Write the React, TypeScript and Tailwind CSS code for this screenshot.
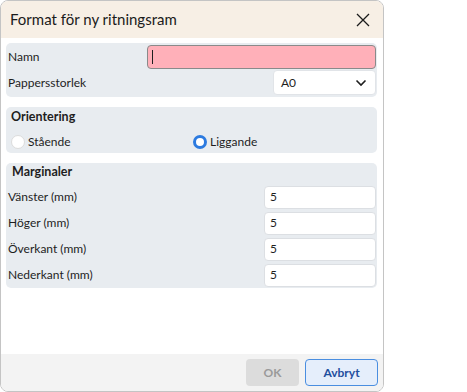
import React from "react";

const F = { fontFamily: 'Lato, "Noto Sans", sans-serif' };

function Row({ label, value }: { label: string; value: string }) {
  return (
    <div className="flex items-center justify-between h-[26px]">
      <span className="text-[12px] text-[#1e1e1e] pl-[1px]">{label}</span>
      <div className="w-[112px] h-[23px] bg-white rounded-[4px] border border-[#dcdfe3] flex items-center px-[5px] text-[12px] text-[#1e1e1e]">
        {value}
      </div>
    </div>
  );
}

export default function App() {
  return (
    <div style={F} className="w-[467px] h-[392px] bg-white">
      <div className="w-[384px] h-[392px] border border-[#c4c4c4] rounded-[8px] overflow-hidden flex flex-col bg-white">
        <div className="h-[37px] bg-[#f7efe5] flex items-center justify-between pl-[9px] pr-[12px] shrink-0">
          <span className="text-[15px] text-[#1b1b1b]">Format för ny ritningsram</span>
          <svg width="16" height="16" viewBox="0 0 16 16">
            <path d="M2 2 L14 14 M14 2 L2 14" stroke="#1b1b1b" strokeWidth="1.3" fill="none" />
          </svg>
        </div>
        <div className="flex-1 pl-[5px] pr-[6px] pt-[5px] flex flex-col gap-[10px]">
          <div className="bg-[#e8ecf0] rounded-[5px] px-[1px] py-[1px] flex flex-col">
            <div className="flex items-center justify-between h-[25px]">
              <span className="text-[12px] text-[#1e1e1e] pl-[1px]">Namn</span>
              <div className="w-[229px] h-[24px] bg-[#ffb0b9] rounded-[4px] border border-[#8a8a8a] flex items-center pl-[4px]">
                <div className="w-[1px] h-[14px] bg-[#1e1e1e]" />
              </div>
            </div>
            <div className="flex items-center justify-between h-[27px]">
              <span className="text-[12px] text-[#1e1e1e] pl-[1px]">Pappersstorlek</span>
              <div className="w-[103px] h-[25px] bg-white rounded-[4px] border border-[#e1e4e8] flex items-center justify-between pl-[7px] pr-[8px] text-[12px] text-[#1e1e1e]">
                <span>A0</span>
                <svg width="12" height="8" viewBox="0 0 12 8">
                  <path d="M1.5 1.5 L6 6 L10.5 1.5" stroke="#1e1e1e" strokeWidth="1.6" fill="none" />
                </svg>
              </div>
            </div>
          </div>
          <div className="bg-[#e8ecf0] rounded-[5px] h-[46px] px-[5px] pt-[1px] flex flex-col">
            <span className="text-[12.5px] font-bold text-[#1e1e1e] leading-[18px]">Orientering</span>
            <div className="flex items-center mt-[7px] h-[18px]">
              <div className="w-[182px] flex items-center gap-[3px]">
                <div className="w-[14px] h-[14px] rounded-full bg-white border border-[#dcdcdc]" />
                <span className="text-[12px] text-[#1e1e1e]">Stående</span>
              </div>
              <div className="flex items-center gap-[3px]">
                <div className="w-[14px] h-[14px] rounded-full bg-white border-[3px] border-[#2d7be0]" />
                <span className="text-[12px] text-[#1e1e1e]">Liggande</span>
              </div>
            </div>
          </div>
          <div className="bg-[#e8ecf0] rounded-[5px] px-[1px] flex flex-col">
            <span className="text-[12.5px] font-bold text-[#1e1e1e] leading-[18px] pl-[5px] mb-[3px]">Marginaler</span>
            <Row label="Vänster (mm)" value="5" />
            <Row label="Höger (mm)" value="5" />
            <Row label="Överkant (mm)" value="5" />
            <Row label="Nederkant (mm)" value="5" />
          </div>
        </div>
        <div className="h-[37px] bg-[#f3f3f3] flex items-center justify-end gap-[6px] pr-[5px] shrink-0">
          <div className="w-[53px] h-[27px] rounded-[4px] bg-[#dcdcdc] flex items-center justify-center text-[12px] font-bold text-[#9a9a9a]">OK</div>
          <div className="w-[73px] h-[27px] rounded-[4px] bg-[#e5eefb] border border-[#4a8ee0] flex items-center justify-center text-[12px] font-bold text-[#1f4f9e]">Avbryt</div>
        </div>
      </div>
    </div>
  );
}
